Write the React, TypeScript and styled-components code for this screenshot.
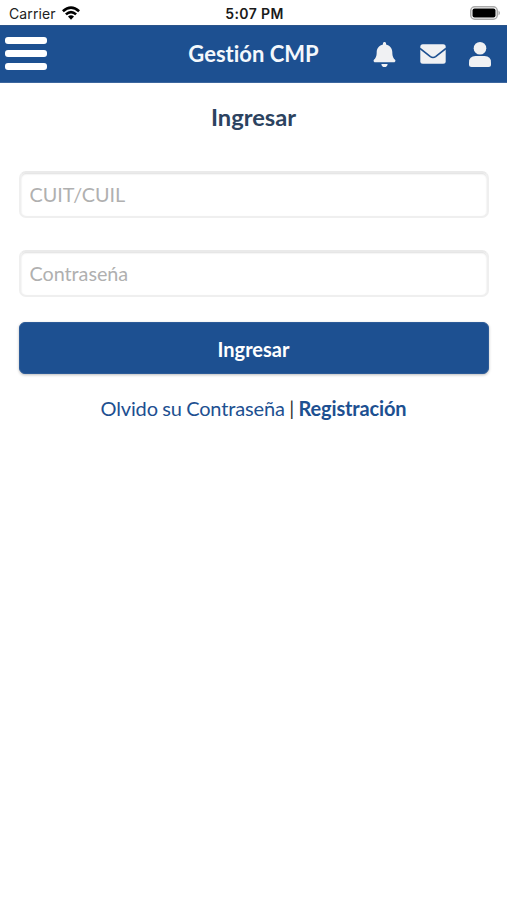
import React from "react";
import styled, { createGlobalStyle } from "styled-components";
import { FaBell } from "react-icons/fa";

const Global = createGlobalStyle`
  *{box-sizing:border-box}
  body{margin:0;background:#fff;font-family:Lato,sans-serif;font-variant-ligatures:none;}
`;
const Screen = styled.div`height:900px;overflow:hidden;background:#fff;`;
const StatusBar = styled.div`
  height:25px;display:grid;grid-template-columns:1fr auto 1fr;align-items:center;
  padding:2px 6px 0 9px;font:14px Inter,sans-serif;color:#222;
`;
const Carrier = styled.div`display:flex;align-items:center;gap:6px;letter-spacing:.1px;svg{margin-top:-2px;}`;
const Time = styled.div`font-weight:600;font-size:14px;letter-spacing:.4px;color:#1a1a1a;padding-right:1px;`;
const Battery = styled.svg`justify-self:end;display:block;margin-top:-1px;`;
const Header = styled.header`
  height:58px;background:#1d5091;display:grid;grid-template-columns:1fr auto 1fr;align-items:center;
  border-top:1px solid #2b5489;border-bottom:1px solid #3c669e;
`;
const Menu = styled.button`
  border:0;background:none;padding:0 0 1px 5px;display:flex;flex-direction:column;gap:6px;
`;
const Bar = styled.span`width:42px;height:7px;border-radius:3px;background:#fff;`;
const Brand = styled.div`color:#f4f8fc;font-weight:700;font-size:22px;line-height:30px;`;
const Actions = styled.div`display:flex;align-items:center;justify-content:flex-end;gap:23px;padding-right:16px;color:#f0f1f3;`;
const Main = styled.main`padding:0 18px 0 19px;display:flex;flex-direction:column;`;
const Title = styled.h1`margin:18px 1px 38px 0;text-align:center;font-size:23.7px;line-height:32px;font-weight:700;color:#2c4360;`;
const Field = styled.input`
  height:47px;margin-bottom:32px;border:2px solid #efefef;border-top-color:#eaeaea;border-radius:7px;padding:0 8px 1px 8.5px;
  font:19.8px Lato,sans-serif;letter-spacing:-.03px;background:#fff;outline:0;box-shadow:inset 0 1px 2px #ddd;
  &::placeholder{color:#b0b0b0;opacity:1}
`;
const Submit = styled.button`
  height:52px;margin-top:-7px;border:1px solid #2c5b98;border-radius:6px;background:#1d5091;color:#fff;
  font:700 20px Lato,sans-serif;padding:2px 1px 0 0;box-shadow:0 1px 3px #bbb;
`;
const Links = styled.p`margin:20px 1px 0 0;text-align:center;font-size:20px;letter-spacing:-.14px;word-spacing:-.6px;line-height:29px;color:#333;`;
const Link = styled.a<{ $strong?: boolean }>`color:#1d5091;font-weight:${p => (p.$strong ? 700 : 400)};`;

export default function App() {
  return (
    <Screen>
      <Global />
      <StatusBar>
        <Carrier>
          Carrier
          <svg width="18" height="14" viewBox="0 0 18 14" fill="none" stroke="#000" strokeWidth="2.6">
            <path d="M.9 5.3Q9-2.2 17.1 5.3M3.9 8.4Q9 3.7 14.1 8.4" />
            <path d="M6 10.6Q9 8 12 10.6L9 13.7Z" fill="#000" stroke="none" />
          </svg>
        </Carrier>
        <Time>5:07 PM</Time>
        <Battery width="31" height="14" viewBox="0 0 31 14">
          <rect x=".75" y=".75" width="26.5" height="12.5" rx="4" fill="none" stroke="#aaa" strokeWidth="1.5" />
          <rect x="2.5" y="2.5" width="23" height="9" rx="2" fill="#000" />
          <path d="M28.5 4.5Q31.5 7 28.5 9.5Z" fill="#aaa" />
        </Battery>
      </StatusBar>
      <Header>
        <Menu aria-label="Menu"><Bar /><Bar /><Bar /></Menu>
        <Brand>Gestión CMP</Brand>
        <Actions>
          <FaBell size={25} />
          <svg width="26" height="20" viewBox="0 0 26 20">
            <rect x=".3" y=".3" width="25.4" height="19.4" rx="2.5" fill="currentColor" />
            <path d="M0 4.5L10.4 12.6Q13 14.5 15.6 12.6L26 4.5" fill="none" stroke="#1d5091" strokeWidth="1.6" />
          </svg>
          <svg width="22" height="25" viewBox="0 0 22 25" fill="currentColor">
            <circle cx="11" cy="6.3" r="6.3" />
            <path d="M6.5 14H15.5Q22 14 22 20.5V22.5Q22 25 19.5 25H2.5Q0 25 0 22.5V20.5Q0 14 6.5 14Z" />
          </svg>
        </Actions>
      </Header>
      <Main>
        <Title>Ingresar</Title>
        <Field placeholder="CUIT/CUIL" />
        <Field type="password" placeholder="Contraseńa" />
        <Submit>Ingresar</Submit>
        <Links><Link>Olvido su Contraseña</Link> | <Link $strong>Registración</Link></Links>
      </Main>
    </Screen>
  );
}
